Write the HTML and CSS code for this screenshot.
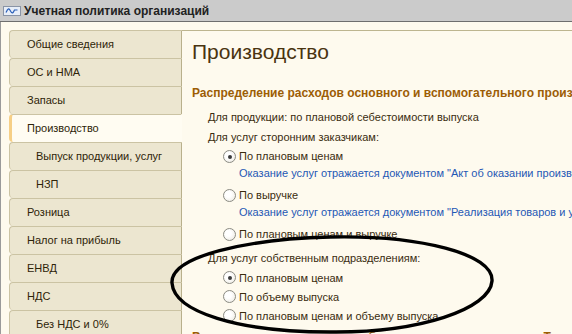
FILE: index.html
```html
<!DOCTYPE html>
<html lang="ru">
<head>
    <meta charset="UTF-8">
    <title>Учетная политика организаций</title>
    <link rel="stylesheet" href="styles.css">
</head>
<body>
    <div class="titlebar">
        <svg class="title-icon" width="18" height="10" viewBox="0 0 18 10">
            <rect x="0.5" y="0.5" width="17" height="9" fill="#e8eef8" stroke="#8a94a6"/>
            <path d="M3 6.5 C5 2, 6 2, 7.5 5 S10 7.5, 11.5 4 L14.5 4" fill="none" stroke="#2a5fb8" stroke-width="1.2"/>
        </svg>
        <span class="title-text">Учетная политика организаций</span>
    </div>

    <div class="window">
        <div class="tabs">
            <div class="tab">Общие сведения</div>
            <div class="tab">ОС и НМА</div>
            <div class="tab">Запасы</div>
            <div class="tab active">Производство</div>
            <div class="tab sub">Выпуск продукции, услуг</div>
            <div class="tab sub">НЗП</div>
            <div class="tab">Розница</div>
            <div class="tab">Налог на прибыль</div>
            <div class="tab">ЕНВД</div>
            <div class="tab">НДС</div>
            <div class="tab sub">Без НДС и 0%</div>
        </div>

        <div class="panel">
            <h1>Производство</h1>
            <div class="section">Распределение расходов основного и вспомогательного производства</div>

            <div class="line">Для продукции: по плановой себестоимости выпуска</div>
            <div class="line">Для услуг сторонним заказчикам:</div>

            <div class="group">
                <div class="option">
                    <div class="radio-row"><span class="radio checked"></span>По плановым ценам</div>
                    <div class="hint">Оказание услуг отражается документом "Акт об оказании производственных услуг"</div>
                </div>
                <div class="option">
                    <div class="radio-row"><span class="radio"></span>По выручке</div>
                    <div class="hint">Оказание услуг отражается документом "Реализация товаров и услуг"</div>
                </div>
                <div class="option">
                    <div class="radio-row"><span class="radio"></span>По плановым ценам и выручке</div>
                </div>
            </div>

            <div class="line own">Для услуг собственным подразделениям:</div>
            <div class="group tight">
                <div class="radio-row"><span class="radio checked"></span>По плановым ценам</div>
                <div class="radio-row"><span class="radio"></span>По объему выпуска</div>
                <div class="radio-row"><span class="radio"></span>По плановым ценам и объему выпуска</div>
            </div>

            <div class="section next">Выпуск продукции и услуг собственным подразделениям Т</div>
        </div>
    </div>

    <!-- hand-drawn mark over the form -->
    <svg class="mark" width="572" height="334" viewBox="0 0 572 334">
        <path d="M172 283 C170 256, 248 239, 330 237 C420 235, 494 254, 492 281 C490 309, 420 333, 330 332 C238 332, 174 312, 172 283 Z"
              fill="none" stroke="#000" stroke-width="3.4"/>
    </svg>
</body>
</html>
```

FILE: styles.css
```css
body {
    margin: 0;
    width: 572px;
    height: 334px;
    overflow: hidden;
    position: relative;
    background-color: #fefaee;
    font-family: "Liberation Sans", Arial, sans-serif;
    font-size: 11px;
    color: #3a2c0e;
}

.titlebar {
    height: 21px;
    background-color: #cbcbcb;
    border-bottom: 1px solid #6e6e6e;
    display: flex;
    align-items: center;
    padding-left: 3px;
}

.title-icon {
    margin-right: 3px;
}

.title-text {
    font-weight: bold;
    font-size: 12px;
    color: #222;
}

.window {
    display: flex;
    border-left: 1px solid #9a9a9a;
    height: 312px;
    padding-top: 8px;
}

.tabs {
    width: 173px;
    margin-left: 8px;
    flex-shrink: 0;
}

.tab {
    height: 27px;
    line-height: 27px;
    background-color: #ece6d0;
    border: 1px solid #cbc3a3;
    border-bottom: none;
    border-right: 1px solid #b9b08c;
    border-radius: 4px 0 0 4px;
    padding-left: 17px;
    color: #2e2408;
}

.tab.sub {
    padding-left: 26px;
}

.tab.active {
    background-color: #fffcf2;
    border-left: 3px solid #f6cf86;
    padding-left: 15px;
    border-right: 1px solid #fffcf2;
}

.panel {
    flex: 1;
    border-top: 1px solid #bdb58f;
    padding: 9px 0 0 10px;
    white-space: nowrap;
    overflow: hidden;
}

h1 {
    margin: 0;
    font-size: 21px;
    font-weight: normal;
    line-height: 24px;
    color: #4a3410;
}

.section {
    margin-top: 20px;
    height: 18px;
    line-height: 18px;
    font-size: 12px;
    font-weight: bold;
    color: #9c5d05;
    margin-bottom: 5px;
}

.section.next {
    margin-top: 3px;
}

.line {
    height: 20px;
    line-height: 20px;
    padding-left: 16px;
}

.line.own {
    margin-top: 5px;
}

.group {
    padding-left: 31px;
}

.option {
    margin-bottom: 4px;
}

.radio-row {
    display: flex;
    align-items: center;
    height: 18px;
}

.tight .radio-row {
    height: 19px;
}

.radio {
    width: 11px;
    height: 11px;
    border: 1px solid #8b8b83;
    border-radius: 50%;
    background: radial-gradient(circle at 40% 40%, #ffffff 30%, #e9e6dc 100%);
    margin-right: 3px;
    position: relative;
    flex-shrink: 0;
}

.radio.checked::after {
    content: "";
    position: absolute;
    left: 4px;
    top: 4px;
    width: 4px;
    height: 4px;
    border-radius: 50%;
    background-color: #3a3a3a;
}

.hint {
    height: 17px;
    line-height: 17px;
    padding-left: 16px;
    color: #1f58b5;
}

.mark {
    position: absolute;
    left: 0;
    top: 0;
    pointer-events: none;
}
```
